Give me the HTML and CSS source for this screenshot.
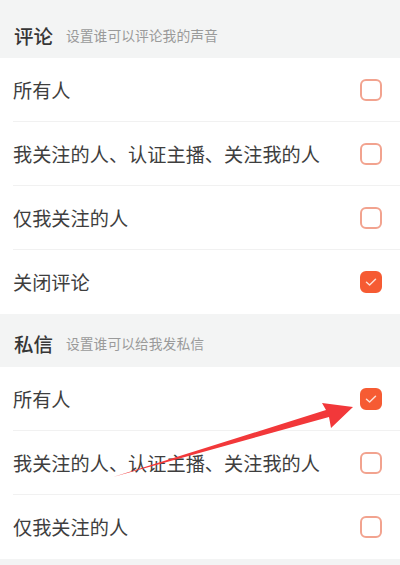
FILE: index.html
```html
<!DOCTYPE html>
<html lang="zh-CN">
<head>
<meta charset="utf-8">
<link rel="stylesheet" href="styles.css">
</head>
<body>
<div class="page">
  <div class="section-head first">
    <span class="title">评论</span><span class="sub">设置谁可以评论我的声音</span>
  </div>
  <div class="list">
    <div class="row"><span class="label">所有人</span><span class="box"></span></div>
    <div class="row"><span class="label">我关注的人、认证主播、关注我的人</span><span class="box"></span></div>
    <div class="row"><span class="label">仅我关注的人</span><span class="box"></span></div>
    <div class="row last"><span class="label">关闭评论</span><span class="box checked"><svg viewBox="0 0 22 22" class="tick"><path d="M6.5 11.2 L9.6 14 L15.5 8.2" /></svg></span></div>
  </div>
  <div class="section-head second">
    <span class="title">私信</span><span class="sub">设置谁可以给我发私信</span>
  </div>
  <div class="list">
    <div class="row"><span class="label">所有人</span><span class="box checked"><svg viewBox="0 0 22 22" class="tick"><path d="M6.5 11.2 L9.6 14 L15.5 8.2" /></svg></span></div>
    <div class="row"><span class="label">我关注的人、认证主播、关注我的人</span><span class="box"></span></div>
    <div class="row last"><span class="label">仅我关注的人</span><span class="box"></span></div>
  </div>
  <div class="foot"></div>
  <svg class="arrow" viewBox="0 0 400 565" width="400" height="565">
    <polygon points="113,477 326,410 322,403 353,407 331,428 329,417" />
  </svg>
</div>
</body>
</html>
```
FILE: styles.css
```css
html, body {
  margin: 0;
  padding: 0;
  background: #ffffff;
}
.page {
  position: relative;
  width: 400px;
  height: 565px;
  overflow: hidden;
  font-family: "Noto Sans CJK SC", "Noto Sans", sans-serif;
  color: #3a3a3a;
}
.section-head {
  background: #f3f4f4;
  display: flex;
  align-items: center;
  padding-left: 14px;
  box-sizing: border-box;
}
.section-head.first {
  height: 58px;
  padding-top: 12px;
}
.section-head.second {
  height: 53px;
  padding-top: 5px;
}
.title {
  font-size: 19.5px;
  font-weight: 500;
  color: #363636;
  margin-right: 13px;
}
.sub {
  font-size: 13.8px;
  color: #9a9a9a;
}
.list {
  background: #ffffff;
  padding-left: 13px;
}
.row {
  height: 64px;
  box-sizing: border-box;
  border-bottom: 1px solid #f1f1f1;
  display: flex;
  align-items: center;
  justify-content: space-between;
  padding-right: 18px;
}
.row.last {
  border-bottom: none;
}
.label {
  font-size: 19.2px;
  color: #3e3e3e;
}
.box {
  width: 22px;
  height: 22px;
  box-sizing: border-box;
  border: 2px solid #f2a38f;
  border-radius: 6px;
  display: flex;
  align-items: center;
  justify-content: center;
}
.box.checked {
  background: #f65b33;
  border-color: #f65b33;
}
.tick {
  width: 22px;
  height: 22px;
  flex: none;
}
.tick path {
  fill: none;
  stroke: #fde0d6;
  stroke-width: 1.5;
  stroke-linecap: round;
  stroke-linejoin: round;
}
.foot {
  background: #f3f4f4;
  height: 10px;
}
.arrow {
  position: absolute;
  left: 0;
  top: 0;
  pointer-events: none;
}
.arrow polygon {
  fill: #f2383a;
}
```
